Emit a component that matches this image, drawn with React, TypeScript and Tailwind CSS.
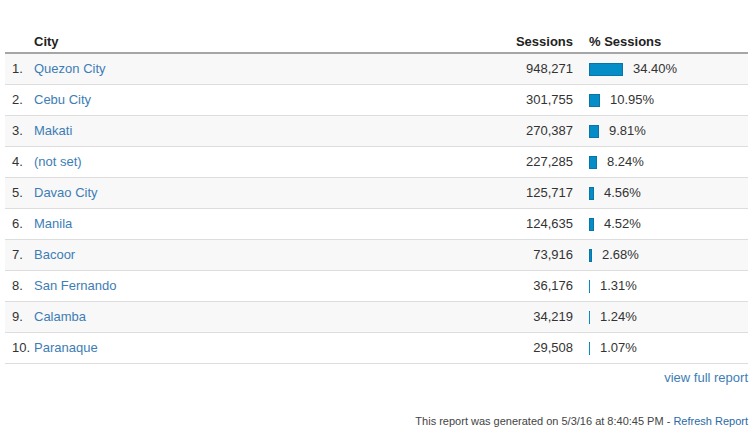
const rows = [
  { city: "Quezon City", sessions: "948,271", pct: 34.4 },
  { city: "Cebu City", sessions: "301,755", pct: 10.95 },
  { city: "Makati", sessions: "270,387", pct: 9.81 },
  { city: "(not set)", sessions: "227,285", pct: 8.24 },
  { city: "Davao City", sessions: "125,717", pct: 4.56 },
  { city: "Manila", sessions: "124,635", pct: 4.52 },
  { city: "Bacoor", sessions: "73,916", pct: 2.68 },
  { city: "San Fernando", sessions: "36,176", pct: 1.31 },
  { city: "Calamba", sessions: "34,219", pct: 1.24 },
  { city: "Paranaque", sessions: "29,508", pct: 1.07 },
]

export default function App() {
  return (
    <div className="w-[754px] h-[434px] bg-white font-['Liberation_Sans',Arial,sans-serif] text-[13px] text-[#333] pt-[31px] px-[5px]">
      <div className="w-[743px]">
        {/* header */}
        <div className="flex h-[23px] items-center border-b-2 border-[#a6a6a6] font-bold text-[#222]">
          <div className="w-[29px]" />
          <div className="flex-1">City</div>
          <div className="w-[120px] pr-[16px] text-right">Sessions</div>
          <div className="w-[159px]">% Sessions</div>
        </div>
        {rows.map((r, i) => (
          <div
            key={i}
            className={
              "flex h-[31px] items-center border-b border-[#ddd] " +
              (i % 2 === 0 ? "bg-[#f8f8f8]" : "bg-white")
            }
          >
            <div className="w-[29px] pl-[7px]">{i + 1}.</div>
            <div className="flex-1 text-[#3d7db5]">{r.city}</div>
            <div className="w-[120px] pr-[16px] text-right">{r.sessions}</div>
            <div className="w-[159px] flex items-center">
              <div
                className={
                  "h-[13px] bg-[#058dc7] border-y border-[#0b74a6] " +
                  (r.pct >= 2 ? "border-x" : "")
                }
                style={{ width: Math.max(1, Math.round(r.pct)) }}
              />
              <span className="ml-[10px]">{r.pct.toFixed(2)}%</span>
            </div>
          </div>
        ))}
        <div className="text-right text-[#3d7db5] mt-[6px] leading-[15px]">view full report</div>
        <div className="text-right text-[11px] text-[#444] mt-[28px]">
          This report was generated on 5/3/16 at 8:40:45 PM - <span className="text-[#2a6aa8]">Refresh Report</span>
        </div>
      </div>
    </div>
  )
}
